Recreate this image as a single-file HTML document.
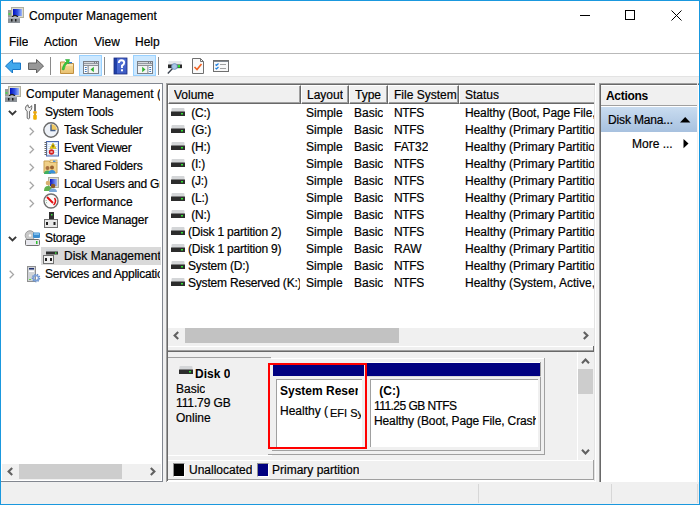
<!DOCTYPE html>
<html><head><meta charset="utf-8">
<style>
*{margin:0;padding:0;box-sizing:border-box}
html,body{width:700px;height:505px;overflow:hidden;background:#f0f0f0}
body{position:relative;font-family:"Liberation Sans",sans-serif;font-size:12px;color:#000}
.a{position:absolute}
.t{position:absolute;white-space:pre;line-height:14px;font-size:12px;overflow:hidden}
.t:not(.b){-webkit-text-stroke:0.2px #000}
.b{font-weight:bold}
svg{position:absolute;overflow:visible}
</style></head><body>
<div class="a" style="left:1px;top:1px;width:698px;height:52px;background:#fff;"></div>
<div class="a" style="left:1px;top:53px;width:698px;height:1px;background:#b9b9b9;"></div>
<div class="a" style="left:1px;top:54px;width:698px;height:22px;background:#fff;"></div>
<div class="a" style="left:1px;top:76px;width:698px;height:1px;background:#e3e3e3;"></div>
<div class="a" style="left:0;top:0;width:700px;height:505px;border:1px solid #1a98de"></div>
<div class="t " style="left:29px;top:9px;letter-spacing:0.1px">Computer Management</div>
<div class="a" style="left:580px;top:15px;width:10px;height:1px;background:#000;"></div>
<div class="a" style="left:625px;top:10px;width:10px;height:10px;border:1px solid #000"></div>
<svg style="left:671px;top:10px" width="11" height="11"><path d="M0.5 0.5L10.5 10.5M10.5 0.5L0.5 10.5" stroke="#000" stroke-width="1"/></svg>
<div class="t " style="left:9px;top:35px;">File</div>
<div class="t " style="left:44px;top:35px;">Action</div>
<div class="t " style="left:94px;top:35px;">View</div>
<div class="t " style="left:135px;top:35px;">Help</div>
<div class="a" style="left:79px;top:55px;width:23px;height:21px;background:#cce8ff;border:1px solid #99d1ff"></div>
<div class="a" style="left:133px;top:55px;width:23px;height:21px;background:#cce8ff;border:1px solid #99d1ff"></div>
<div class="a" style="left:50px;top:57px;width:1px;height:18px;background:#8a8a8a;"></div>
<div class="a" style="left:104px;top:57px;width:1px;height:18px;background:#8a8a8a;"></div>
<div class="a" style="left:158px;top:57px;width:1px;height:18px;background:#8a8a8a;"></div>
<div class="a" style="left:1px;top:83px;width:162px;height:399px;background:#fff;border-top:1px solid #828790;border-right:1px solid #828790;border-bottom:1px solid #828790"></div>
<div class="a" style="left:41px;top:247px;width:120px;height:18px;background:#d9d9d9;"></div>
<div class="t " style="left:26px;top:87px;width:134px;letter-spacing:0.08px">Computer Management (Local)</div>
<div class="t " style="left:45px;top:105px;width:115px;letter-spacing:-0.25px">System Tools</div>
<div class="t " style="left:64px;top:123px;width:96px;letter-spacing:-0.25px">Task Scheduler</div>
<div class="t " style="left:64px;top:141px;width:96px;letter-spacing:-0.25px">Event Viewer</div>
<div class="t " style="left:64px;top:159px;width:96px;letter-spacing:-0.25px">Shared Folders</div>
<div class="t " style="left:64px;top:177px;width:96px;letter-spacing:-0.25px">Local Users and Groups</div>
<div class="t " style="left:64px;top:195px;width:96px;letter-spacing:0px">Performance</div>
<div class="t " style="left:64px;top:213px;width:96px;letter-spacing:-0.25px">Device Manager</div>
<div class="t " style="left:45px;top:231px;width:115px;letter-spacing:-0.25px">Storage</div>
<div class="t " style="left:64px;top:249px;width:96px;letter-spacing:0px">Disk Management</div>
<div class="t " style="left:45px;top:267px;width:115px;letter-spacing:-0.25px">Services and Applications</div>
<div class="a" style="left:2px;top:464px;width:159px;height:16px;background:#f0f0f0;"></div>
<div class="a" style="left:19px;top:464px;width:103px;height:15px;background:#cdcdcd;"></div>
<div class="a" style="left:166px;top:83px;width:430px;height:263px;background:#fff;border-top:1px solid #a0a0a0;border-left:1px solid #a0a0a0"></div>
<div class="a" style="left:167px;top:84px;width:429px;height:262px;background:transparent;border-top:1px solid #696969;border-left:1px solid #696969"></div>
<div class="a" style="left:168px;top:85px;width:133px;height:19px;background:#f0f0f0;border-top:1px solid #fff;border-left:1px solid #fff;border-right:1px solid #696969;border-bottom:1px solid #696969;box-shadow:inset -1px -1px 0 #a0a0a0"></div>
<div class="t " style="left:174px;top:88px;">Volume</div>
<div class="a" style="left:301px;top:85px;width:48px;height:19px;background:#f0f0f0;border-top:1px solid #fff;border-left:1px solid #fff;border-right:1px solid #696969;border-bottom:1px solid #696969;box-shadow:inset -1px -1px 0 #a0a0a0"></div>
<div class="t " style="left:307px;top:88px;">Layout</div>
<div class="a" style="left:349px;top:85px;width:39px;height:19px;background:#f0f0f0;border-top:1px solid #fff;border-left:1px solid #fff;border-right:1px solid #696969;border-bottom:1px solid #696969;box-shadow:inset -1px -1px 0 #a0a0a0"></div>
<div class="t " style="left:355px;top:88px;">Type</div>
<div class="a" style="left:388px;top:85px;width:71px;height:19px;background:#f0f0f0;border-top:1px solid #fff;border-left:1px solid #fff;border-right:1px solid #696969;border-bottom:1px solid #696969;box-shadow:inset -1px -1px 0 #a0a0a0"></div>
<div class="t " style="left:394px;top:88px;">File System</div>
<div class="a" style="left:459px;top:85px;width:135px;height:19px;background:#f0f0f0;border-top:1px solid #fff;border-left:1px solid #fff;border-bottom:1px solid #696969;box-shadow:inset 0 -1px 0 #a0a0a0"></div>
<div class="t " style="left:465px;top:88px;">Status</div>
<div class="t " style="left:188px;top:106px;width:112px;letter-spacing:-0.2px"> (C:)</div>
<div class="t " style="left:306px;top:106px;">Simple</div>
<div class="t " style="left:354px;top:106px;">Basic</div>
<div class="t " style="left:394px;top:106px;letter-spacing:-0.4px">NTFS</div>
<div class="t " style="left:465px;top:106px;width:129px;letter-spacing:-0.12px">Healthy (Boot, Page File, Crash Dump, Primary Partition)</div>
<div class="t " style="left:188px;top:123px;width:112px;letter-spacing:-0.2px"> (G:)</div>
<div class="t " style="left:306px;top:123px;">Simple</div>
<div class="t " style="left:354px;top:123px;">Basic</div>
<div class="t " style="left:394px;top:123px;letter-spacing:-0.4px">NTFS</div>
<div class="t " style="left:465px;top:123px;width:129px">Healthy (Primary Partition)</div>
<div class="t " style="left:188px;top:140px;width:112px;letter-spacing:-0.2px"> (H:)</div>
<div class="t " style="left:306px;top:140px;">Simple</div>
<div class="t " style="left:354px;top:140px;">Basic</div>
<div class="t " style="left:394px;top:140px;">FAT32</div>
<div class="t " style="left:465px;top:140px;width:129px">Healthy (Primary Partition)</div>
<div class="t " style="left:188px;top:157px;width:112px;letter-spacing:-0.2px"> (I:)</div>
<div class="t " style="left:306px;top:157px;">Simple</div>
<div class="t " style="left:354px;top:157px;">Basic</div>
<div class="t " style="left:394px;top:157px;letter-spacing:-0.4px">NTFS</div>
<div class="t " style="left:465px;top:157px;width:129px">Healthy (Primary Partition)</div>
<div class="t " style="left:188px;top:174px;width:112px;letter-spacing:-0.2px"> (J:)</div>
<div class="t " style="left:306px;top:174px;">Simple</div>
<div class="t " style="left:354px;top:174px;">Basic</div>
<div class="t " style="left:394px;top:174px;letter-spacing:-0.4px">NTFS</div>
<div class="t " style="left:465px;top:174px;width:129px">Healthy (Primary Partition)</div>
<div class="t " style="left:188px;top:191px;width:112px;letter-spacing:-0.2px"> (L:)</div>
<div class="t " style="left:306px;top:191px;">Simple</div>
<div class="t " style="left:354px;top:191px;">Basic</div>
<div class="t " style="left:394px;top:191px;letter-spacing:-0.4px">NTFS</div>
<div class="t " style="left:465px;top:191px;width:129px">Healthy (Primary Partition)</div>
<div class="t " style="left:188px;top:208px;width:112px;letter-spacing:-0.2px"> (N:)</div>
<div class="t " style="left:306px;top:208px;">Simple</div>
<div class="t " style="left:354px;top:208px;">Basic</div>
<div class="t " style="left:394px;top:208px;letter-spacing:-0.4px">NTFS</div>
<div class="t " style="left:465px;top:208px;width:129px">Healthy (Primary Partition)</div>
<div class="t " style="left:188px;top:225px;width:112px;letter-spacing:-0.2px">(Disk 1 partition 2)</div>
<div class="t " style="left:306px;top:225px;">Simple</div>
<div class="t " style="left:354px;top:225px;">Basic</div>
<div class="t " style="left:394px;top:225px;letter-spacing:-0.4px">NTFS</div>
<div class="t " style="left:465px;top:225px;width:129px">Healthy (Primary Partition)</div>
<div class="t " style="left:188px;top:242px;width:112px;letter-spacing:-0.2px">(Disk 1 partition 9)</div>
<div class="t " style="left:306px;top:242px;">Simple</div>
<div class="t " style="left:354px;top:242px;">Basic</div>
<div class="t " style="left:394px;top:242px;">RAW</div>
<div class="t " style="left:465px;top:242px;width:129px">Healthy (Primary Partition)</div>
<div class="t " style="left:188px;top:259px;width:112px;letter-spacing:-0.2px">System (D:)</div>
<div class="t " style="left:306px;top:259px;">Simple</div>
<div class="t " style="left:354px;top:259px;">Basic</div>
<div class="t " style="left:394px;top:259px;letter-spacing:-0.4px">NTFS</div>
<div class="t " style="left:465px;top:259px;width:129px">Healthy (Primary Partition)</div>
<div class="t " style="left:188px;top:276px;width:112px;letter-spacing:-0.2px">System Reserved (K:)</div>
<div class="t " style="left:306px;top:276px;">Simple</div>
<div class="t " style="left:354px;top:276px;">Basic</div>
<div class="t " style="left:394px;top:276px;letter-spacing:-0.4px">NTFS</div>
<div class="t " style="left:465px;top:276px;width:129px">Healthy (System, Active, Primary Partition)</div>
<div class="a" style="left:168px;top:328px;width:426px;height:18px;background:#f0f0f0;"></div>
<div class="a" style="left:185px;top:328px;width:214px;height:15px;background:#c2c2c2;"></div>
<div class="a" style="left:168px;top:346px;width:426px;height:1px;background:#fff;"></div>
<div class="a" style="left:168px;top:350px;width:426px;height:1px;background:#a0a0a0;"></div>
<div class="a" style="left:166px;top:351px;width:428px;height:1px;background:#696969;"></div>
<div class="a" style="left:593px;top:346px;width:1px;height:5px;background:#696969;"></div>
<div class="a" style="left:166px;top:352px;width:430px;height:130px;background:#f0f0f0;border-left:1px solid #a0a0a0"></div>
<div class="a" style="left:167px;top:352px;width:1px;height:130px;background:#696969;"></div>
<div class="a" style="left:168px;top:357px;width:103px;height:1px;background:#a0a0a0;"></div>
<div class="t b" style="left:195px;top:367px;">Disk 0</div>
<div class="t " style="left:176px;top:382px;">Basic</div>
<div class="t " style="left:176px;top:396px;letter-spacing:-0.12px">111.79 GB</div>
<div class="t " style="left:176px;top:411px;">Online</div>
<div class="a" style="left:271px;top:358px;width:274px;height:1px;background:#fff;"></div>
<div class="a" style="left:544px;top:358px;width:1px;height:97px;background:#a0a0a0;"></div>
<div class="a" style="left:268px;top:454px;width:277px;height:1px;background:#a0a0a0;"></div>
<div class="a" style="left:272px;top:450px;width:269px;height:1px;background:#a0a0a0;"></div>
<div class="a" style="left:367px;top:362px;width:173px;height:1px;background:#fff;"></div>
<div class="a" style="left:540px;top:362px;width:1px;height:89px;background:#a0a0a0;"></div>
<div class="a" style="left:367px;top:363px;width:173px;height:13px;background:#000080;"></div>
<div class="a" style="left:367px;top:376px;width:174px;height:1px;background:#d8d8d8;"></div>
<div class="a" style="left:370px;top:379px;width:168px;height:68px;background:#fff;border-top:1px solid #a0a0a0;border-left:1px solid #a0a0a0"></div>
<div class="t b" style="left:376px;top:384px;"> (C:)</div>
<div class="t " style="left:374px;top:399px;width:162px;letter-spacing:-0.55px">111.25 GB NTFS</div>
<div class="t " style="left:374px;top:414px;width:162px;letter-spacing:-0.12px">Healthy (Boot, Page File, Crash Dump, Primary Partition)</div>
<div class="a" style="left:270px;top:365px;width:95px;height:82px;background:#f0f0f0;"></div>
<div class="a" style="left:273px;top:365px;width:91px;height:11px;background:#000080;"></div>
<div class="a" style="left:276px;top:379px;width:86px;height:68px;background:#fff;border-top:1px solid #a0a0a0;border-left:1px solid #a0a0a0"></div>
<div class="t b" style="left:280px;top:384px;width:78px">System Reserved</div>
<div class="t " style="left:280px;top:404px;width:50px">Healthy (</div>
<div class="t " style="left:330px;top:406px;width:31px;font-size:11px">EFI System Partition</div>
<div class="a" style="left:268px;top:363px;width:99px;height:86px;background:transparent;border:2px solid #f00"></div>
<div class="a" style="left:578px;top:358px;width:16px;height:98px;background:#f0f0f0;"></div>
<div class="a" style="left:578px;top:369px;width:15px;height:25px;background:#cdcdcd;"></div>
<div class="a" style="left:168px;top:455px;width:104px;height:1px;background:#fff;"></div>
<div class="a" style="left:168px;top:460px;width:426px;height:1px;background:#fff;"></div>
<div class="a" style="left:593px;top:460px;width:1px;height:20px;background:#a0a0a0;"></div>
<div class="a" style="left:577px;top:352px;width:1px;height:108px;background:#fff;"></div>
<div class="a" style="left:173px;top:463px;width:12px;height:14px;background:#000;border-top:1px solid #909090;border-left:1px solid #909090;border-right:1px solid #fff;border-bottom:1px solid #fff"></div>
<div class="t " style="left:189px;top:463px;">Unallocated</div>
<div class="a" style="left:257px;top:463px;width:12px;height:14px;background:#000080;border-top:1px solid #909090;border-left:1px solid #909090;border-right:1px solid #fff;border-bottom:1px solid #fff"></div>
<div class="t " style="left:272px;top:463px;">Primary partition</div>
<div class="a" style="left:166px;top:479px;width:428px;height:1px;background:#a0a0a0;"></div>
<div class="a" style="left:166px;top:480px;width:430px;height:2px;background:#fff;"></div>
<div class="a" style="left:594px;top:85px;width:1px;height:396px;background:#e3e3e3;"></div>
<div class="a" style="left:595px;top:83px;width:1px;height:399px;background:#fff;"></div>
<div class="a" style="left:596px;top:83px;width:3px;height:399px;background:#f4f4f4;"></div>
<div class="a" style="left:166px;top:83px;width:1px;height:399px;background:#a0a0a0;"></div>
<div class="a" style="left:167px;top:84px;width:1px;height:397px;background:#696969;"></div>
<div class="a" style="left:599px;top:83px;width:100px;height:399px;background:#fff;border-top:1px solid #a0a0a0;border-left:1px solid #a0a0a0"></div>
<div class="a" style="left:600px;top:84px;width:99px;height:398px;background:transparent;border-top:1px solid #696969;border-left:1px solid #696969"></div>
<div class="a" style="left:601px;top:85px;width:97px;height:21px;background:#f0f0f0;border-top:1px solid #fff;border-bottom:1px solid #a0a0a0"></div>
<div class="t b" style="left:606px;top:89px;letter-spacing:-0.3px">Actions</div>
<div class="a" style="left:601px;top:107px;width:97px;height:25px;background:linear-gradient(#c9dcf0,#a7c1df);"></div>
<div class="t " style="left:608px;top:113px;letter-spacing:-0.15px">Disk Mana...</div>
<div class="t " style="left:632px;top:137px;">More ...</div>
<div class="a" style="left:697px;top:83px;width:1px;height:399px;background:#f0f0f0;"></div>
<div class="a" style="left:478px;top:484px;width:1px;height:19px;background:#d7d7d7;"></div>
<div class="a" style="left:611px;top:484px;width:1px;height:19px;background:#d7d7d7;"></div>
<div class="a" style="left:697px;top:484px;width:1px;height:19px;background:#d7d7d7;"></div>
<svg style="left:8px;top:7px" width="16" height="16" viewBox="0 0 16 16">
<rect x="3.5" y="0.5" width="12" height="10" fill="#dcdccf" stroke="#b0b0a0"/>
<defs><linearGradient id="cmg" x1="0" x2="1" y1="0" y2="0"><stop offset="0" stop-color="#0010c0"/><stop offset="0.5" stop-color="#3050e0"/><stop offset="1" stop-color="#a0b8f8"/></linearGradient></defs>
<rect x="5" y="2" width="9" height="7" fill="url(#cmg)"/>
<rect x="0" y="3" width="3" height="7" fill="#9a9a9a"/>
<rect x="0.5" y="6" width="2" height="2" fill="#50d050"/>
<path d="M4 10 Q7 7 10 10" stroke="#202020" stroke-width="1.2" fill="none"/>
<rect x="0" y="10" width="12" height="6" fill="#8c9298"/>
<rect x="0" y="10" width="12" height="1.5" fill="#b8bec4"/>
<rect x="3" y="12" width="1.5" height="2.5" fill="#202020"/>
<rect x="7" y="12" width="1.5" height="2.5" fill="#202020"/>
</svg>
<svg style="left:5px;top:59px" width="16" height="15" viewBox="0 0 16 15">
<path d="M0.5 7 L7.5 0.5 L7.5 4 L15.5 4 L15.5 10.5 L7.5 10.5 L7.5 14 Z" fill="#40a8ec" stroke="#1878c8" stroke-width="1"/>
</svg>
<svg style="left:28px;top:59px" width="16" height="15" viewBox="0 0 16 15">
<path d="M15.5 7 L8.5 0.5 L8.5 4 L0.5 4 L0.5 10.5 L8.5 10.5 L8.5 14 Z" fill="#989898" stroke="#606060" stroke-width="1"/>
</svg>
<svg style="left:59px;top:58px" width="16" height="16" viewBox="0 0 16 16">
<defs><linearGradient id="fug" x1="0" x2="0" y1="0" y2="1"><stop offset="0" stop-color="#f8e0a0"/><stop offset="1" stop-color="#e8c070"/></linearGradient></defs>
<path d="M1.5 4 L6 4 L7 5.5 L14.5 5.5 L14.5 15.5 L1.5 15.5 Z" fill="url(#fug)" stroke="#c09040" stroke-width="1"/>
<rect x="2" y="6.5" width="12" height="1" fill="#fff0c8"/>
<rect x="10" y="4" width="3" height="1.3" fill="#3080e0"/>
<path d="M3 11.5 Q4 6 7.5 3.5 L6.5 1.5 L10.5 1.5 L9.5 6 L8.6 4.8 Q6 7 5 12 Z" fill="#38c840" stroke="#20a028" stroke-width="0.5"/>
</svg>
<svg style="left:83px;top:61px" width="16" height="13" viewBox="0 0 16 13">
<rect x="0" y="0" width="16" height="13" fill="#7a8088"/>
<rect x="1" y="1" width="14" height="1.3" fill="#d4d8dc"/>
<rect x="11" y="1" width="1" height="1.3" fill="#7a8088"/><rect x="13" y="1" width="1" height="1.3" fill="#7a8088"/>
<rect x="1" y="3" width="14" height="1.2" fill="#dcdfe2"/>
<g>
<rect x="1" y="5" width="3.6" height="7" fill="#fff"/>
<rect x="5.6" y="5" width="9.4" height="7" fill="#f4f4f4"/>
<rect x="1.8" y="6" width="2" height="1" rx="0.5" fill="#3a78c0"/><rect x="1.8" y="8" width="2" height="1" rx="0.5" fill="#3a78c0"/><rect x="1.8" y="10" width="2" height="1" rx="0.5" fill="#3a78c0"/>
<path d="M7.5 8.5 L10.8 5.8 L10.8 11.2 Z" fill="#30b030"/>
</g></svg>
<svg style="left:114px;top:58px" width="13" height="16" viewBox="0 0 13 16">
<defs><linearGradient id="hlg" x1="0" x2="1" y1="0" y2="1"><stop offset="0" stop-color="#5878e0"/><stop offset="1" stop-color="#3a58c0"/></linearGradient></defs>
<rect x="0" y="0" width="13" height="16" fill="url(#hlg)"/>
<rect x="0" y="0" width="3" height="16" fill="#2040a8"/>
<rect x="0" y="0" width="13" height="16" fill="none" stroke="#1a2c80" stroke-width="0.8"/>
<path d="M4.8 5 Q4.8 2.2 7.5 2.2 Q10.2 2.2 10.2 4.8 Q10.2 6.5 8 7.6 L8 10" stroke="#fff" stroke-width="1.9" fill="none"/>
<rect x="7" y="11.3" width="2" height="2" fill="#fff"/>
</svg>
<svg style="left:137px;top:61px" width="16" height="13" viewBox="0 0 16 13">
<rect x="0" y="0" width="16" height="13" fill="#7a8088"/>
<rect x="1" y="1" width="14" height="1.3" fill="#d4d8dc"/>
<rect x="11" y="1" width="1" height="1.3" fill="#7a8088"/><rect x="13" y="1" width="1" height="1.3" fill="#7a8088"/>
<rect x="1" y="3" width="14" height="1.2" fill="#dcdfe2"/>
<g transform="translate(16,0) scale(-1,1)">
<rect x="1" y="5" width="3.6" height="7" fill="#fff"/>
<rect x="5.6" y="5" width="9.4" height="7" fill="#f4f4f4"/>
<rect x="1.8" y="6" width="2" height="1" rx="0.5" fill="#3a78c0"/><rect x="1.8" y="8" width="2" height="1" rx="0.5" fill="#3a78c0"/><rect x="1.8" y="10" width="2" height="1" rx="0.5" fill="#3a78c0"/>
<path d="M7.5 8.5 L10.8 5.8 L10.8 11.2 Z" fill="#30b030"/>
</g></svg>
<svg style="left:166px;top:60px" width="16" height="16" viewBox="0 0 16 16">
<rect x="2.5" y="1" width="13" height="4" fill="#e4e7ea"/>
<rect x="2" y="4.5" width="14" height="3.5" fill="#2a2a2a"/>
<rect x="2" y="8" width="14" height="1" fill="#d8dcdf"/>
<rect x="11.5" y="5" width="2.5" height="2.5" fill="#30e030"/>
<circle cx="8.5" cy="6.5" r="2.9" fill="#a8c4e4" stroke="#6a8cb8" stroke-width="0.8"/>
<path d="M6.3 8.8 L1.8 13.5" stroke="#3c4450" stroke-width="1.4"/>
</svg>
<svg style="left:192px;top:58px" width="12" height="16" viewBox="0 0 12 16">
<path d="M0.5 0.5 L8.5 0.5 L11.5 3.5 L11.5 15.5 L0.5 15.5 Z" fill="#fafafa" stroke="#707070" stroke-width="1"/>
<path d="M8.5 0.5 L8.5 3.5 L11.5 3.5" fill="none" stroke="#707070"/>
<path d="M2.5 9 L5 11.5 L9.5 6" stroke="#f06020" stroke-width="1.6" fill="none"/>
</svg>
<svg style="left:213px;top:60px" width="16" height="12" viewBox="0 0 16 12">
<rect x="0.5" y="0.5" width="15" height="11" fill="#f8f8f8" stroke="#707070"/>
<rect x="1" y="1" width="14" height="1" fill="#808890"/>
<path d="M2.5 4.5 L3.5 5.5 L5.5 3.5 M2.5 8 L3.5 9 L5.5 7" stroke="#2080e0" stroke-width="1.2" fill="none"/>
<path d="M7 4.5h6M7 8.5h6" stroke="#a0a0a0" stroke-width="1"/>
</svg>
<svg style="left:5px;top:86px" width="16" height="16" viewBox="0 0 16 16">
<rect x="3.5" y="0.5" width="12" height="10" fill="#dcdccf" stroke="#b0b0a0"/>
<defs><linearGradient id="cmg" x1="0" x2="1" y1="0" y2="0"><stop offset="0" stop-color="#0010c0"/><stop offset="0.5" stop-color="#3050e0"/><stop offset="1" stop-color="#a0b8f8"/></linearGradient></defs>
<rect x="5" y="2" width="9" height="7" fill="url(#cmg)"/>
<rect x="0" y="3" width="3" height="7" fill="#9a9a9a"/>
<rect x="0.5" y="6" width="2" height="2" fill="#50d050"/>
<path d="M4 10 Q7 7 10 10" stroke="#202020" stroke-width="1.2" fill="none"/>
<rect x="0" y="10" width="12" height="6" fill="#8c9298"/>
<rect x="0" y="10" width="12" height="1.5" fill="#b8bec4"/>
<rect x="3" y="12" width="1.5" height="2.5" fill="#202020"/>
<rect x="7" y="12" width="1.5" height="2.5" fill="#202020"/>
</svg>
<svg style="left:24px;top:104px" width="16" height="16" viewBox="0 0 16 16">
<path d="M4 0.8 Q1.2 1.8 1.4 4.6 Q1.8 6.6 3.2 7.2 L3.2 14.2 Q4.3 15.6 5.6 14.2 L5.6 7.2 Q7.8 6.2 7.8 3.6 L7.6 1.6 L6 3.6 L4.4 3.2 Z" fill="#f0f0f0" stroke="#6a6a6a" stroke-width="1"/>
<rect x="10.2" y="0" width="1.6" height="7.5" fill="#585858"/>
<rect x="9.2" y="7.2" width="3.6" height="2.2" rx="0.5" fill="#f0a800"/>
<rect x="10" y="9.4" width="2" height="1.4" fill="#c88a00"/>
<rect x="9.2" y="10.8" width="3.6" height="5" rx="1" fill="#f0b000"/>
</svg>
<svg style="left:43px;top:122px" width="16" height="16" viewBox="0 0 16 16">
<circle cx="8" cy="8" r="7.2" fill="#eef2f8" stroke="#6a6a6a" stroke-width="1.4"/>
<path d="M8 8 L8 2 A6 6 0 0 1 14 8 Z" fill="#f0c860"/>
<path d="M8 2.5 L8 8.5 L12.5 8.5" stroke="#46608a" stroke-width="1.4" fill="none"/>
</svg>
<svg style="left:43px;top:141px" width="16" height="16" viewBox="0 0 16 16">
<rect x="3.5" y="0.5" width="12" height="14.5" fill="#d4e4f8" stroke="#4a68b0"/>
<path d="M5 2.5h9M5 4.5h9M5 6.5h9M5 8.5h9M5 10.5h9M5 12.5h9" stroke="#ffffff" stroke-width="0.9"/>
<path d="M1.5 1.5h2.5M1.5 3.5h2.5M1.5 5.5h2.5M1.5 7.5h2.5M1.5 9.5h2.5M1.5 11.5h2.5M1.5 13.5h2.5" stroke="#6a6a6a" stroke-width="1"/>
<path d="M10 2 L13.2 7.6 L6.8 7.6 Z" fill="#f4d200" stroke="#b89a00" stroke-width="0.5"/>
<rect x="9.5" y="3.8" width="1" height="2.6" fill="#303030"/>
<circle cx="8.5" cy="11" r="2.7" fill="#d42020"/>
<path d="M7.6 10.1 L9.4 11.9 M9.4 10.1 L7.6 11.9" stroke="#fff" stroke-width="0.8"/>
</svg>
<svg style="left:43px;top:158px" width="16" height="16" viewBox="0 0 16 16">
<path d="M1 3 L6 3 L7 4 L14 4 L14 15 L1 15 Z" fill="#f0d088" stroke="#c8a050" stroke-width="1"/>
<rect x="7" y="2" width="7" height="2.5" fill="#f8e8b8" stroke="#c8a050" stroke-width="0.8"/>
<rect x="10" y="2.6" width="2.5" height="1.2" fill="#3080e0"/>
<circle cx="4.5" cy="10" r="2" fill="#a87040"/>
<path d="M1 16 Q1 12.5 4.5 12.5 Q8 12.5 8 16 Z" fill="#40b060"/>
<circle cx="9" cy="9.5" r="2" fill="#986030"/>
<path d="M5.5 15.5 Q5.5 12 9 12 Q12.5 12 12.5 15.5 Z" fill="#3890d8"/>
</svg>
<svg style="left:43px;top:176px" width="16" height="16" viewBox="0 0 16 16">
<rect x="5.5" y="1.5" width="10" height="10" fill="#dcdccf" stroke="#b0b0a0"/>
<defs><linearGradient id="lug" x1="0" x2="1"><stop offset="0" stop-color="#0010c0"/><stop offset="1" stop-color="#a0b8f8"/></linearGradient></defs>
<rect x="7" y="3" width="7" height="7" fill="url(#lug)"/>
<circle cx="5" cy="7" r="2.3" fill="#d8b070"/>
<path d="M1 15 Q1 10 5 10 Q9 10 9 15 Z" fill="#60b050"/>
<circle cx="10" cy="10" r="2.3" fill="#8a5a28"/>
<path d="M6 16 Q6 12.5 10 12.5 Q14 12.5 14 16 Z" fill="#7aa8d8"/>
</svg>
<svg style="left:43px;top:193px" width="16" height="16" viewBox="0 0 16 16">
<circle cx="8" cy="8" r="7" fill="#fafafa" stroke="#707070" stroke-width="1.4"/>
<path d="M4 4 L10 10" stroke="#e01010" stroke-width="2"/>
<path d="M11.5 5 A5 5 0 0 1 10.5 12" stroke="#e01010" stroke-width="1.5" fill="none"/>
<path d="M3.2 7 A5 5 0 0 0 4.5 11" stroke="#60a070" stroke-width="0.8" fill="none" stroke-dasharray="1 1"/>
</svg>
<svg style="left:43px;top:212px" width="16" height="16" viewBox="0 0 16 16">
<rect x="6" y="0" width="5" height="7" fill="#303030"/>
<rect x="8" y="2" width="1.5" height="1.5" fill="#40e040"/>
<rect x="1.5" y="7.5" width="13" height="8" fill="#e8e8e8" stroke="#707070"/>
<rect x="3" y="10" width="2" height="3" fill="#202020"/>
<rect x="10.5" y="10" width="2" height="3" fill="#202020"/>
</svg>
<svg style="left:24px;top:230px" width="16" height="16" viewBox="0 0 16 16">
<circle cx="6" cy="5.5" r="4.8" fill="#c8c8c8" stroke="#909090" stroke-width="0.8"/>
<circle cx="6" cy="5.5" r="1.2" fill="#fff"/>
<rect x="9" y="2.5" width="7" height="5.5" rx="1" fill="#3c8ed0"/>
<rect x="10" y="3.3" width="5" height="1.5" fill="#90c8f0"/>
<rect x="1.5" y="9.5" width="14" height="6" rx="1" fill="#e8e8ee" stroke="#707070"/>
<rect x="12" y="11" width="1.5" height="3" fill="#30c030"/>
</svg>
<svg style="left:43px;top:248px" width="16" height="16" viewBox="0 0 16 16">
<rect x="3" y="1" width="12" height="3" fill="#d0d4d8"/>
<rect x="3" y="3.5" width="12" height="3" fill="#303030"/>
<rect x="12" y="4.3" width="1.5" height="1.5" fill="#40e040"/>
<rect x="0.5" y="7.5" width="10" height="8" fill="#f0f0f0" stroke="#707070"/>
<rect x="2" y="10" width="2" height="3" fill="#202020"/>
<rect x="7" y="10" width="2" height="3" fill="#202020"/>
</svg>
<svg style="left:24px;top:266px" width="16" height="16" viewBox="0 0 16 16">
<rect x="3.5" y="0.5" width="8" height="15" fill="#d0d4d8" stroke="#909090"/>
<rect x="5" y="2" width="5" height="1.5" fill="#203070"/>
<rect x="5" y="4.5" width="5" height="1.5" fill="#ffffff"/>
<rect x="5" y="13" width="2" height="1" fill="#60e040"/>
<circle cx="12" cy="12" r="3.2" fill="none" stroke="#6890c8" stroke-width="2.2" stroke-dasharray="1.3 0.9"/>
<circle cx="12" cy="12" r="2.5" fill="none" stroke="#7ca0d8" stroke-width="1.5"/>
</svg>
<svg style="left:8px;top:110px" width="9" height="6" viewBox="0 0 9 6"><path d="M0.9 0.9 L4.5 4.5 L8.1 0.9" stroke="#383838" stroke-width="1.9" fill="none"/></svg>
<svg style="left:8px;top:236px" width="9" height="6" viewBox="0 0 9 6"><path d="M0.9 0.9 L4.5 4.5 L8.1 0.9" stroke="#383838" stroke-width="1.9" fill="none"/></svg>
<svg style="left:29px;top:127px" width="6" height="9" viewBox="0 0 6 9"><path d="M0.7 0.7 L4.5 4.5 L0.7 8.3" stroke="#a6a6a6" stroke-width="1.3" fill="none"/></svg>
<svg style="left:29px;top:145px" width="6" height="9" viewBox="0 0 6 9"><path d="M0.7 0.7 L4.5 4.5 L0.7 8.3" stroke="#a6a6a6" stroke-width="1.3" fill="none"/></svg>
<svg style="left:29px;top:163px" width="6" height="9" viewBox="0 0 6 9"><path d="M0.7 0.7 L4.5 4.5 L0.7 8.3" stroke="#a6a6a6" stroke-width="1.3" fill="none"/></svg>
<svg style="left:29px;top:181px" width="6" height="9" viewBox="0 0 6 9"><path d="M0.7 0.7 L4.5 4.5 L0.7 8.3" stroke="#a6a6a6" stroke-width="1.3" fill="none"/></svg>
<svg style="left:29px;top:199px" width="6" height="9" viewBox="0 0 6 9"><path d="M0.7 0.7 L4.5 4.5 L0.7 8.3" stroke="#a6a6a6" stroke-width="1.3" fill="none"/></svg>
<svg style="left:9px;top:270px" width="6" height="9" viewBox="0 0 6 9"><path d="M0.7 0.7 L4.5 4.5 L0.7 8.3" stroke="#a6a6a6" stroke-width="1.3" fill="none"/></svg>
<svg style="left:171px;top:108px" width="14" height="8" viewBox="0 0 14 8">
<rect x="0.5" y="0" width="13" height="4" rx="1" fill="#d4d6d8"/>
<rect x="0" y="3.5" width="14" height="4.5" fill="#2c2c2c"/>
<rect x="10" y="5" width="2" height="1.5" fill="#30e030"/>
</svg>
<svg style="left:171px;top:125px" width="14" height="8" viewBox="0 0 14 8">
<rect x="0.5" y="0" width="13" height="4" rx="1" fill="#d4d6d8"/>
<rect x="0" y="3.5" width="14" height="4.5" fill="#2c2c2c"/>
<rect x="10" y="5" width="2" height="1.5" fill="#30e030"/>
</svg>
<svg style="left:171px;top:142px" width="14" height="8" viewBox="0 0 14 8">
<rect x="0.5" y="0" width="13" height="4" rx="1" fill="#d4d6d8"/>
<rect x="0" y="3.5" width="14" height="4.5" fill="#2c2c2c"/>
<rect x="10" y="5" width="2" height="1.5" fill="#30e030"/>
</svg>
<svg style="left:171px;top:159px" width="14" height="8" viewBox="0 0 14 8">
<rect x="0.5" y="0" width="13" height="4" rx="1" fill="#d4d6d8"/>
<rect x="0" y="3.5" width="14" height="4.5" fill="#2c2c2c"/>
<rect x="10" y="5" width="2" height="1.5" fill="#30e030"/>
</svg>
<svg style="left:171px;top:176px" width="14" height="8" viewBox="0 0 14 8">
<rect x="0.5" y="0" width="13" height="4" rx="1" fill="#d4d6d8"/>
<rect x="0" y="3.5" width="14" height="4.5" fill="#2c2c2c"/>
<rect x="10" y="5" width="2" height="1.5" fill="#30e030"/>
</svg>
<svg style="left:171px;top:193px" width="14" height="8" viewBox="0 0 14 8">
<rect x="0.5" y="0" width="13" height="4" rx="1" fill="#d4d6d8"/>
<rect x="0" y="3.5" width="14" height="4.5" fill="#2c2c2c"/>
<rect x="10" y="5" width="2" height="1.5" fill="#30e030"/>
</svg>
<svg style="left:171px;top:210px" width="14" height="8" viewBox="0 0 14 8">
<rect x="0.5" y="0" width="13" height="4" rx="1" fill="#d4d6d8"/>
<rect x="0" y="3.5" width="14" height="4.5" fill="#2c2c2c"/>
<rect x="10" y="5" width="2" height="1.5" fill="#30e030"/>
</svg>
<svg style="left:171px;top:227px" width="14" height="8" viewBox="0 0 14 8">
<rect x="0.5" y="0" width="13" height="4" rx="1" fill="#d4d6d8"/>
<rect x="0" y="3.5" width="14" height="4.5" fill="#2c2c2c"/>
<rect x="10" y="5" width="2" height="1.5" fill="#30e030"/>
</svg>
<svg style="left:171px;top:244px" width="14" height="8" viewBox="0 0 14 8">
<rect x="0.5" y="0" width="13" height="4" rx="1" fill="#d4d6d8"/>
<rect x="0" y="3.5" width="14" height="4.5" fill="#2c2c2c"/>
<rect x="10" y="5" width="2" height="1.5" fill="#30e030"/>
</svg>
<svg style="left:171px;top:261px" width="14" height="8" viewBox="0 0 14 8">
<rect x="0.5" y="0" width="13" height="4" rx="1" fill="#d4d6d8"/>
<rect x="0" y="3.5" width="14" height="4.5" fill="#2c2c2c"/>
<rect x="10" y="5" width="2" height="1.5" fill="#30e030"/>
</svg>
<svg style="left:171px;top:278px" width="14" height="8" viewBox="0 0 14 8">
<rect x="0.5" y="0" width="13" height="4" rx="1" fill="#d4d6d8"/>
<rect x="0" y="3.5" width="14" height="4.5" fill="#2c2c2c"/>
<rect x="10" y="5" width="2" height="1.5" fill="#30e030"/>
</svg>
<svg style="left:179px;top:366px" width="14" height="8" viewBox="0 0 14 8">
<rect x="0.5" y="0" width="13" height="4" rx="1" fill="#d4d6d8"/>
<rect x="0" y="3.5" width="14" height="4.5" fill="#2c2c2c"/>
<rect x="10" y="5" width="2" height="1.5" fill="#30e030"/>
</svg>
<svg style="left:7px;top:467px" width="6" height="9" viewBox="0 0 6 9"><path d="M5.2 1 L1.6 4.5 L5.2 8" stroke="#606060" stroke-width="2.1" fill="none"/></svg>
<svg style="left:150px;top:467px" width="6" height="9" viewBox="0 0 6 9"><path d="M0.8 1 L4.4 4.5 L0.8 8" stroke="#606060" stroke-width="2.1" fill="none"/></svg>
<svg style="left:173px;top:331px" width="6" height="9" viewBox="0 0 6 9"><path d="M5.2 1 L1.6 4.5 L5.2 8" stroke="#606060" stroke-width="2.1" fill="none"/></svg>
<svg style="left:583px;top:331px" width="6" height="9" viewBox="0 0 6 9"><path d="M0.8 1 L4.4 4.5 L0.8 8" stroke="#606060" stroke-width="2.1" fill="none"/></svg>
<svg style="left:581px;top:358px" width="9" height="6" viewBox="0 0 9 6"><path d="M1 5.2 L4.5 1.6 L8 5.2" stroke="#606060" stroke-width="2.1" fill="none"/></svg>
<svg style="left:581px;top:449px" width="9" height="6" viewBox="0 0 9 6"><path d="M1 0.8 L4.5 4.4 L8 0.8" stroke="#606060" stroke-width="2.1" fill="none"/></svg>
<svg style="left:680px;top:117px" width="11" height="6" viewBox="0 0 11 6"><path d="M0 5.5 L5.2 0 L10.4 5.5 Z" fill="#000"/></svg>
<svg style="left:683px;top:139px" width="6" height="10" viewBox="0 0 6 10"><path d="M0.5 0 L5.5 4.6 L0.5 9.2 Z" fill="#000"/></svg>
</body></html>
